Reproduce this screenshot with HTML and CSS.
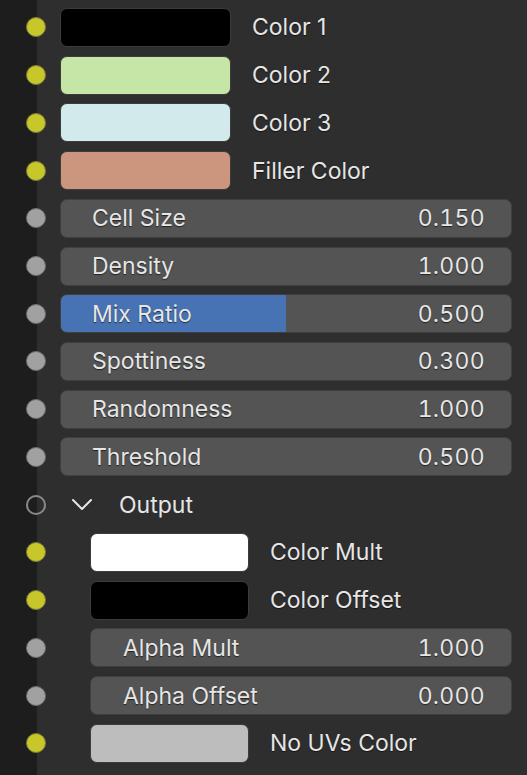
FILE: index.html
```html
<!DOCTYPE html>
<html lang="en">

<head>
    <meta charset="UTF-8">
    <meta name="viewport" content="width=device-width, initial-scale=1.0">
    <title>Node Inputs</title>
    <link rel="stylesheet" href="styles.css">
</head>

<body>
    <div class="node">
        <!-- Color inputs -->
        <div class="row">
            <span class="socket color"></span>
            <div class="swatch" style="background-color: #000000;"></div>
            <span class="label">Color 1</span>
        </div>
        <div class="row">
            <span class="socket color"></span>
            <div class="swatch" style="background-color: #c5e6a6;"></div>
            <span class="label">Color 2</span>
        </div>
        <div class="row">
            <span class="socket color"></span>
            <div class="swatch" style="background-color: #d3eaec;"></div>
            <span class="label">Color 3</span>
        </div>
        <div class="row">
            <span class="socket color"></span>
            <div class="swatch" style="background-color: #cc967e;"></div>
            <span class="label">Filler Color</span>
        </div>

        <!-- Float inputs -->
        <div class="row">
            <span class="socket value"></span>
            <div class="field"><span>Cell Size</span><span class="num">0.150</span></div>
        </div>
        <div class="row">
            <span class="socket value"></span>
            <div class="field"><span>Density</span><span class="num">1.000</span></div>
        </div>
        <div class="row">
            <span class="socket value"></span>
            <div class="field slider">
                <div class="slider-fill" style="width: 50%;"></div>
                <span>Mix Ratio</span><span class="num">0.500</span>
            </div>
        </div>
        <div class="row">
            <span class="socket value"></span>
            <div class="field"><span>Spottiness</span><span class="num">0.300</span></div>
        </div>
        <div class="row">
            <span class="socket value"></span>
            <div class="field"><span>Randomness</span><span class="num">1.000</span></div>
        </div>
        <div class="row">
            <span class="socket value"></span>
            <div class="field"><span>Threshold</span><span class="num">0.500</span></div>
        </div>

        <!-- Output panel -->
        <div class="row">
            <span class="socket panel"></span>
            <svg class="chevron" width="22" height="13" viewBox="0 0 22 13">
                <path d="M2 2 L11 11 L20 2" fill="none" stroke="#e6e6e6" stroke-width="2" stroke-linecap="round" stroke-linejoin="round"/>
            </svg>
            <span class="panel-title">Output</span>
        </div>
        <div class="row indent">
            <span class="socket color"></span>
            <div class="swatch" style="background-color: #ffffff;"></div>
            <span class="label">Color Mult</span>
        </div>
        <div class="row indent">
            <span class="socket color"></span>
            <div class="swatch" style="background-color: #000000;"></div>
            <span class="label">Color Offset</span>
        </div>
        <div class="row indent">
            <span class="socket value"></span>
            <div class="field"><span>Alpha Mult</span><span class="num">1.000</span></div>
        </div>
        <div class="row indent">
            <span class="socket value"></span>
            <div class="field"><span>Alpha Offset</span><span class="num">0.000</span></div>
        </div>
        <div class="row indent">
            <span class="socket color"></span>
            <div class="swatch" style="background-color: #bdbdbd;"></div>
            <span class="label">No UVs Color</span>
        </div>
    </div>
</body>

</html>
```

FILE: styles.css
```css
body {
    margin: 0;
    padding: 0;
    width: 527px;
    height: 775px;
    overflow: hidden;
    background: linear-gradient(to right, #1d1d1d 0, #1d1d1d 37px, #2e2e2e 37px);
    font-family: Inter, "Noto Sans", sans-serif;
    font-size: 23px;
    color: #e6e6e6;
}

.node {
    padding-top: 3.6px;
}

.row {
    display: flex;
    align-items: center;
    height: 47.73px;
    padding-right: 15px;
}

.socket {
    flex: none;
    box-sizing: border-box;
    width: 20px;
    height: 20px;
    margin-left: 26px;
    margin-right: 14px;
    border-radius: 50%;
}

.socket.color {
    background-color: #c7c729;
    border: 1.5px solid #7d7a3c;
}

.socket.value {
    background-color: #a1a1a1;
    border: 1.5px solid #6e6e6e;
}

.socket.panel {
    border: 2px solid #8a8a8a;
    background: transparent;
}

.indent .socket {
    margin-right: 44px;
}

.swatch {
    flex: none;
    box-sizing: border-box;
    width: 171px;
    height: 39px;
    border-radius: 7px;
    border: 1px solid #3c3c3c;
}

.indent .swatch {
    width: 159px;
}

.label {
    margin-left: 21px;
    text-shadow: 0 1px 1px rgba(0, 0, 0, 0.6);
}

.field {
    position: relative;
    flex: 1;
    display: flex;
    justify-content: space-between;
    align-items: center;
    box-sizing: border-box;
    height: 39px;
    padding: 0 26px 0 31px;
    background-color: #545454;
    border: 1px solid #3f3f3f;
    border-radius: 7px;
    overflow: hidden;
    text-shadow: 0 1px 1px rgba(0, 0, 0, 0.6);
}

.indent .field {
    padding-left: 32px;
}

.field span {
    position: relative;
}

.field .num {
    font-variant-numeric: tabular-nums;
    letter-spacing: 0.3px;
}

.slider-fill {
    position: absolute;
    left: 0;
    top: 0;
    bottom: 0;
    background-color: #4772b3;
}

.chevron {
    flex: none;
    margin-left: 11px;
}

.panel-title {
    margin-left: 26px;
}
```
